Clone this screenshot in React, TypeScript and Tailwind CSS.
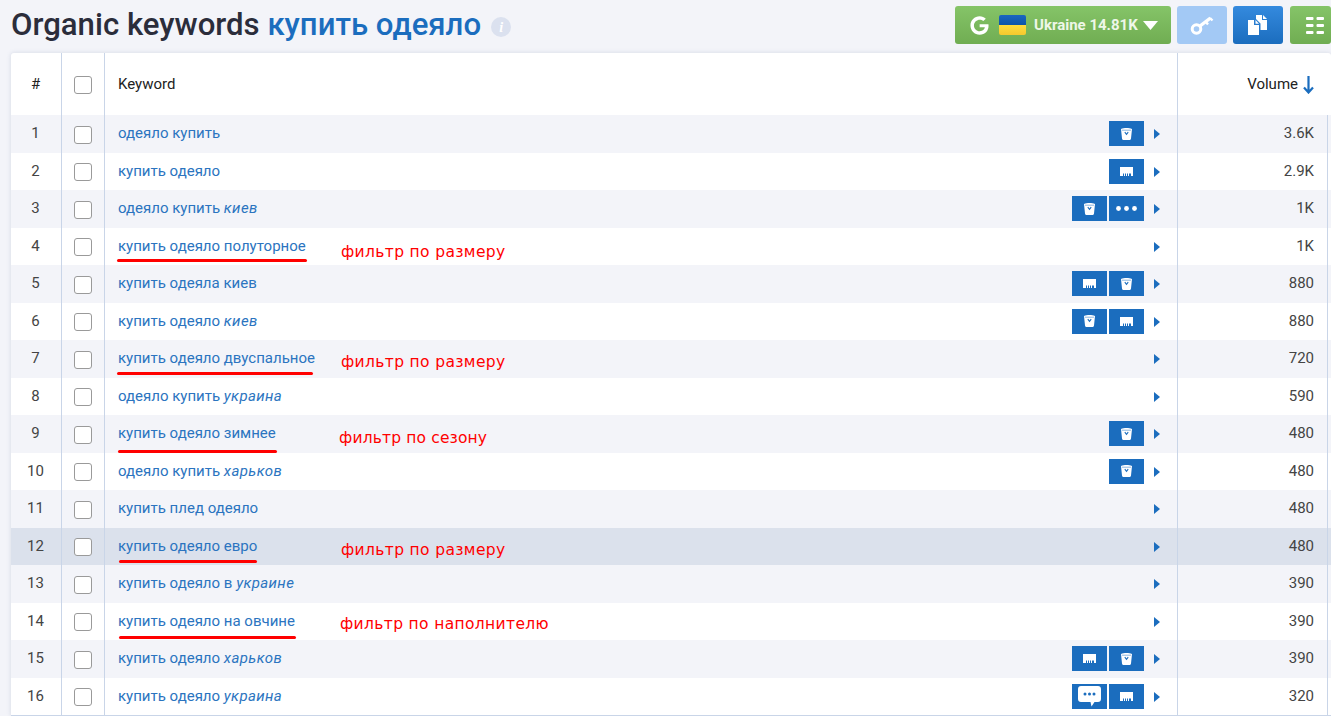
import React from 'react';
import { FaGoogle } from 'react-icons/fa';

type IconKind = 'bag' | 'store' | 'dots' | 'chat';

interface Row {
  keyword: string;
  tail?: string;
  icons: IconKind[];
  volume: string;
  note?: { text: string; left: number; top: number; tight?: boolean };
  line?: { left: number; width: number; top: number };
}

const rows: Row[] = [
  { keyword: 'одеяло купить', icons: ['bag'], volume: '3.6K' },
  { keyword: 'купить одеяло', icons: ['store'], volume: '2.9K' },
  { keyword: 'одеяло купить ', tail: 'киев', icons: ['bag', 'dots'], volume: '1K' },
  {
    keyword: 'купить одеяло полуторное', icons: [], volume: '1K',
    note: { text: 'фильтр по размеру', left: 236, top: 14 },
    line: { left: 12, width: 190, top: 31.5 },
  },
  { keyword: 'купить одеяла киев', icons: ['store', 'bag'], volume: '880' },
  { keyword: 'купить одеяло ', tail: 'киев', icons: ['bag', 'store'], volume: '880' },
  {
    keyword: 'купить одеяло двуспальное', icons: [], volume: '720',
    note: { text: 'фильтр по размеру', left: 236, top: 12 },
    line: { left: 12, width: 196, top: 31.5 },
  },
  { keyword: 'одеяло купить ', tail: 'украина', icons: [], volume: '590' },
  {
    keyword: 'купить одеяло зимнее', icons: ['bag'], volume: '480',
    note: { text: 'фильтр по сезону', left: 234, top: 13, tight: true },
    line: { left: 13, width: 159, top: 34.5 },
  },
  { keyword: 'одеяло купить ', tail: 'харьков', icons: ['bag'], volume: '480' },
  { keyword: 'купить плед одеяло', icons: [], volume: '480' },
  {
    keyword: 'купить одеяло евро', icons: [], volume: '480',
    note: { text: 'фильтр по размеру', left: 236, top: 12.5 },
    line: { left: 14, width: 138, top: 32.5 },
  },
  { keyword: 'купить одеяло в ', tail: 'украине', icons: [], volume: '390' },
  {
    keyword: 'купить одеяло на овчине', icons: [], volume: '390',
    note: { text: 'фильтр по наполнителю', left: 235, top: 11 },
    line: { left: 14, width: 177, top: 33 },
  },
  { keyword: 'купить одеяло ', tail: 'харьков', icons: ['store', 'bag'], volume: '390' },
  { keyword: 'купить одеяло ', tail: 'украина', icons: ['chat', 'store'], volume: '320' },
];

function TagIcon({ kind }: { kind: IconKind }) {
  if (kind === 'bag') {
    return (
      <svg width="11" height="12" viewBox="0 0 11 12" fill="white">
        <path d="M0 1 C3 -.2 8 -.2 11 1 L10 10.5 C9.9 11.5 9 12 8 12 H3 C2 12 1.1 11.5 1 10.5 Z" />
        <path d="M3.8 4.2 L5.5 6.4 L7.2 4.2" fill="none" stroke="#1b6dbe" strokeWidth="1.1" />
        <path d="M1 2.2 H10" stroke="#1b6dbe" strokeWidth=".5" />
      </svg>
    );
  }
  if (kind === 'store') {
    return (
      <svg width="13" height="9" viewBox="0 0 13 9" fill="white">
        <path d="M0 0 H13 V9 H11 V6.5 H9 V9 H8 V6.5 H7 V9 H6 V6.5 H5 V9 H4 V6.5 H3 V9 H0 Z" />
      </svg>
    );
  }
  if (kind === 'dots') {
    return (
      <svg width="21" height="5" viewBox="0 0 21 5" fill="white">
        <circle cx="2.5" cy="2.5" r="2.4" />
        <circle cx="10.5" cy="2.5" r="2.4" />
        <circle cx="18.5" cy="2.5" r="2.4" />
      </svg>
    );
  }
  return (
    <svg width="23" height="21" viewBox="0 0 23 21" fill="white">
      <path d="M3 0 H20 C21.8 0 23 1.2 23 3 V13 C23 14.8 21.8 16 20 16 H16.5 L13.5 20.5 L12.5 16 H3 C1.2 16 0 14.8 0 13 V3 C0 1.2 1.2 0 3 0 Z" />
      <circle cx="7" cy="8" r="1.5" fill="#1b6dbe" />
      <circle cx="11.5" cy="8" r="1.5" fill="#1b6dbe" />
      <circle cx="16" cy="8" r="1.5" fill="#1b6dbe" />
    </svg>
  );
}

function Checkbox() {
  return <div className="w-[18px] h-[18px] rounded-[3px] border border-[#9a9a9a] bg-white" />;
}

function RowTriangle() {
  return (
    <svg width="6" height="10" viewBox="0 0 6 10" className="ml-[10px] mr-[17px] mt-[1px]" fill="#1b6dbe">
      <path d="M0 0 L6 5 L0 10 Z" />
    </svg>
  );
}

function TableRow({ row, index }: { row: Row; index: number }) {
  const bg = index === 11 ? 'bg-[#dbe1ec]' : index % 2 === 0 ? 'bg-[#f3f4f9]' : 'bg-white';
  return (
    <div className={`flex h-[37.5px] ${bg}`}>
      <div className="w-[51px] shrink-0 border-r border-[#c9d5e8] flex items-center justify-center pr-[1px] pb-[1px] text-[15px] text-[#444]">
        {index + 1}
      </div>
      <div className="w-[43px] shrink-0 border-r border-[#c9d5e8] flex items-center justify-center pt-[2px]">
        <Checkbox />
      </div>
      <div className="relative flex-1 flex items-center pl-[13px]">
        <span className="text-[15px] text-[#2b74c0] mb-[1px]">
          {row.keyword}
          {row.tail && <i className="tracking-[0.4px]">{row.tail}</i>}
        </span>
        {row.note && (
          <span
            className={`absolute text-[15.5px] leading-[20px] ${row.note.tight ? 'tracking-[0.15px]' : 'tracking-[0.35px]'} text-[#f00] font-['DejaVu_Sans',sans-serif] whitespace-nowrap`}
            style={{ left: row.note.left, top: row.note.top }}
          >
            {row.note.text}
          </span>
        )}
        {row.line && (
          <div
            className="absolute h-[3px] rounded-full bg-[#f00]"
            style={{ left: row.line.left, width: row.line.width, top: row.line.top }}
          />
        )}
        <div className="ml-auto flex items-center gap-[2px]">
          {row.icons.map((kind, i) => (
            <div key={i} className="w-[35px] h-[25px] bg-[#1b6dbe] flex items-center justify-center">
              <TagIcon kind={kind} />
            </div>
          ))}
        </div>
        <RowTriangle />
      </div>
      <div className="w-[151px] shrink-0 border-x border-[#c9d5e8] flex items-center justify-end pr-[13px] pb-[1px] text-[15px] text-[#444]">
        {row.volume}
      </div>
      <div className="w-[3px] shrink-0" />
    </div>
  );
}

export default function App() {
  return (
    <div className="h-[716px] overflow-hidden bg-[#f3f4f9] font-['Roboto',sans-serif]">
      {/* Title bar */}
      <div className="h-[53px] flex items-start pl-[11px]">
        <h1 className="mt-[6px] text-[31.15px] leading-[38px] text-[#2b2d3b] font-medium whitespace-nowrap">
          Organic keywords <span className="text-[#1b6dbe]">купить одеяло</span>
        </h1>
        <div className="ml-[10px] mt-[17px] w-[20px] h-[20px] rounded-full bg-[#dbe1ef] flex items-center justify-center text-white text-[14px] font-bold italic font-['Liberation_Serif',serif]">
          i
        </div>
        <div className="ml-auto mt-[6px] flex items-start">
          <div className="w-[216px] h-[38px] rounded-[3px] bg-gradient-to-b from-[#85c468] to-[#70ad52] flex items-center pl-[15px] text-white">
            <FaGoogle className="w-[19px] h-[19px]" />
            <div className="ml-[10px] w-[27px] h-[20px] rounded-[2px] overflow-hidden flex flex-col">
              <div className="h-1/2 bg-gradient-to-b from-[#1a66c0] to-[#0d55a8]" />
              <div className="h-1/2 bg-gradient-to-b from-[#ffdc3c] to-[#f5c92e]" />
            </div>
            <span className="ml-[8px] text-[15px] font-bold text-[#eef7e8] whitespace-nowrap">Ukraine 14.81K</span>
            <svg width="15" height="9" viewBox="0 0 15 9" className="ml-[5px]" fill="white">
              <path d="M0 0 H15 L7.5 9 Z" />
            </svg>
          </div>
          <div className="ml-[6px] w-[50px] h-[38px] rounded-[3px] bg-[#a3c9f5] flex items-center justify-center">
            <svg width="24" height="20" viewBox="0 0 24 20" fill="none" stroke="white">
              <circle cx="6.5" cy="14" r="4.3" strokeWidth="3" />
              <path d="M10 11 L20.5 3" strokeWidth="3.4" />
              <path d="M16 7 L18 9.5 M20 3 L22.5 5.5" strokeWidth="2.4" />
            </svg>
          </div>
          <div className="ml-[6px] w-[50px] h-[38px] rounded-[3px] bg-gradient-to-b from-[#348ade] to-[#1b6dbe] flex items-center justify-center">
            <svg width="20" height="20" viewBox="0 0 20 20" fill="white">
              <path d="M0 5 H6 V10 H11 V20 H0 Z" />
              <path d="M7.5 5 L11 8.8 H7.5 Z" />
              <path d="M8 0 H14 V5 H19 V15 H12.5 V8.5 L8 4 Z" />
              <path d="M15 0 L19 4 H15 Z" />
            </svg>
          </div>
          <div className="ml-[7px] w-[41px] h-[38px] rounded-[3px] bg-gradient-to-b from-[#85c468] to-[#70ad52] flex items-center pl-[16px]">
            <svg width="18" height="17" viewBox="0 0 18 17" fill="white">
              <rect x="0" y="0" width="7.5" height="3" rx="1" />
              <rect x="10.5" y="0" width="7.5" height="3" rx="1" />
              <rect x="0" y="7" width="7.5" height="3" rx="1" />
              <rect x="10.5" y="7" width="7.5" height="3" rx="1" />
              <rect x="0" y="14" width="7.5" height="3" rx="1" />
              <rect x="10.5" y="14" width="7.5" height="3" rx="1" />
            </svg>
          </div>
        </div>
      </div>

      {/* Table */}
      <div className="ml-[11px] bg-white rounded-t-[3px] border-b border-[#c9d5e8] shadow-[0_0_4px_rgba(120,140,170,0.25)]">
        <div className="flex h-[62px] text-[#222]">
          <div className="w-[51px] shrink-0 border-r border-[#c9d5e8] flex items-center justify-center pr-[1px] text-[15px]">#</div>
          <div className="w-[43px] shrink-0 border-r border-[#c9d5e8] flex items-center justify-center pt-[1px]">
            <Checkbox />
          </div>
          <div className="flex-1 flex items-center pl-[13px] pt-[1px] text-[15px]">Keyword</div>
          <div className="w-[154px] shrink-0 border-l border-[#c9d5e8] flex items-center justify-end pr-[17px] pt-[1px] text-[15px]">
            Volume
            <svg width="11" height="18" viewBox="0 0 11 18" className="ml-[5px]" fill="none" stroke="#1b6dbe" strokeWidth="2.2">
              <path d="M5.5 0 V16 M1 11.5 L5.5 16.5 L10 11.5" />
            </svg>
          </div>
        </div>
        {rows.map((row, i) => (
          <TableRow key={i} row={row} index={i} />
        ))}
      </div>
    </div>
  );
}
